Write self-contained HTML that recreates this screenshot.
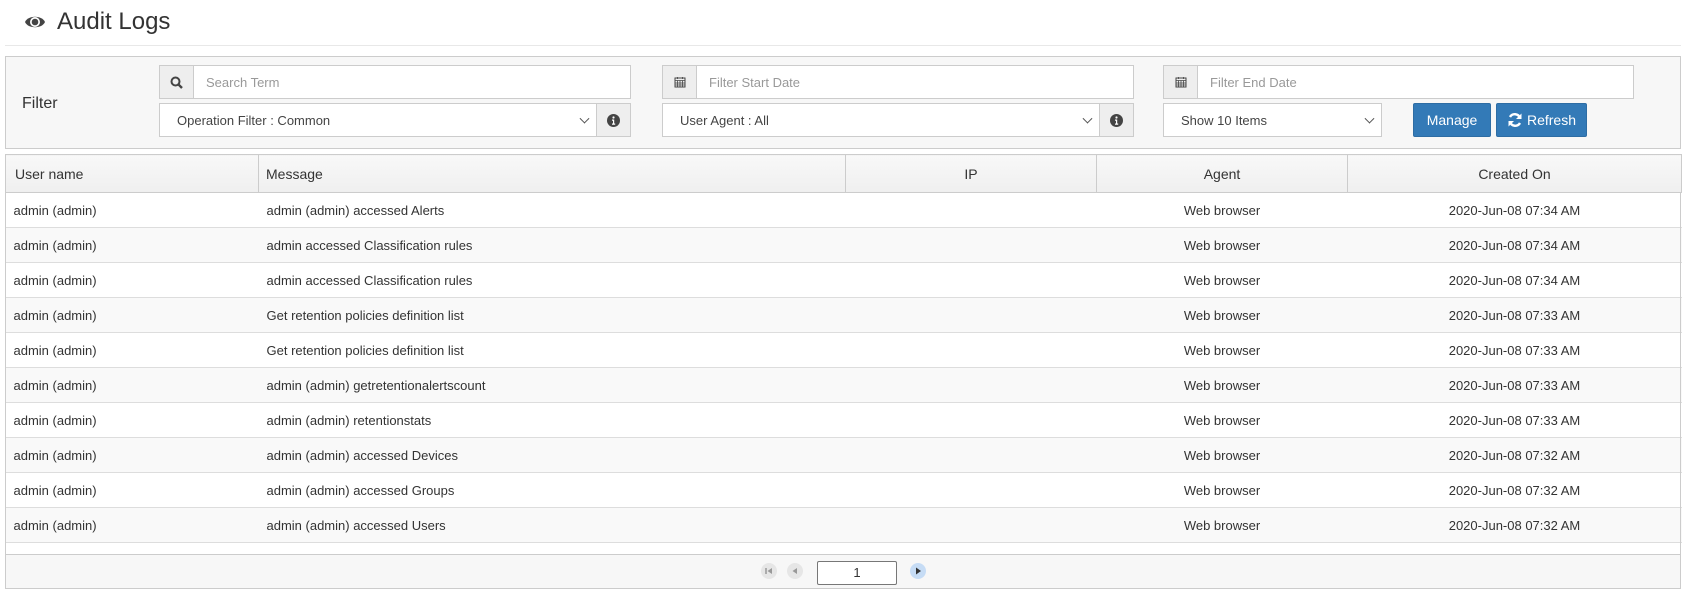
<!DOCTYPE html>
<html><head><meta charset="utf-8"><style>
*{box-sizing:border-box;margin:0;padding:0}
body{width:1688px;height:593px;background:#fff;font-family:"Liberation Sans",sans-serif;color:#333;position:relative;overflow:hidden;font-size:13px}
.abs{position:absolute}
.title{left:24px;top:8px;font-size:24px;color:#333;display:flex;align-items:center;gap:11px}
.sep{left:5px;right:7px;top:45px;height:1px;background:#e8e8e8}
.fbox{left:5px;top:56px;width:1676px;height:93px;background:#f7f7f7;border:1px solid #ccc}
.grp{position:absolute;height:34px;border:1px solid #ccc;background:#fff;display:flex;align-items:center}
.add{width:34px;height:100%;background:#eee;display:flex;align-items:center;justify-content:center;border-right:1px solid #ccc}
.addr{border-right:none;border-left:1px solid #ccc}
.ph{color:#999;padding-left:12px;flex:1;font-size:13px}
.sel{flex:1;padding-left:17px;position:relative;font-size:13px;color:#444}
.chev{position:absolute;right:8px;top:50%;width:7px;height:7px;border-right:1.5px solid #555;border-bottom:1.5px solid #555;transform:translateY(-70%) rotate(45deg)}
.btn{position:absolute;top:103px;height:34px;background:#337ab7;border:1px solid #2e6da4;border-radius:2px;color:#fff;font-size:14px;display:flex;align-items:center;justify-content:center;gap:4px}
table{position:absolute;left:5px;top:154px;width:1676px;border-collapse:collapse;font-size:13px;table-layout:fixed}
th{height:38px;font-weight:normal;font-size:14px;background:linear-gradient(#f8f8f8,#efefef);border:1px solid #ccc;color:#333}
td{height:35px;border-bottom:1px solid #ddd;padding:0 8px;color:#333}
tr:nth-child(odd) td{background:#f9f9f9}
.tl{border-left:1px solid #ccc;border-right:1px solid #ccc;position:absolute}
.pager{left:5px;top:554px;width:1676px;height:35px;background:#f7f7f7;border:1px solid #ccc}
.pc{position:absolute;top:563px;width:16px;height:16px;border-radius:50%;background:#e6e6e6}
</style></head><body>
<div class="abs title"><svg width="22" height="18" viewBox="0 0 22 18"><path d="M1 9C4 2 18 2 21 9C18 16 4 16 1 9Z" fill="#444"/><circle cx="11" cy="9" r="5" fill="#fff"/><circle cx="11" cy="9" r="3.3" fill="#444"/></svg><span>Audit Logs</span></div>
<div class="abs sep"></div>
<div class="abs fbox"></div>
<div class="abs" style="left:22px;top:95px;font-size:16px;color:#333">Filter</div>

<div class="grp" style="left:159px;top:65px;width:472px"><div class="add"><svg width="13" height="13" viewBox="0 0 13 13"><circle cx="5.5" cy="5.5" r="4" stroke="#444" stroke-width="2" fill="none"/><path d="M8.3 8.3L12 12" stroke="#444" stroke-width="2.4"/></svg></div><div class="ph">Search Term</div></div>
<div class="grp" style="left:159px;top:103px;width:472px"><div class="sel">Operation Filter : Common<span class="chev"></span></div><div class="add addr"><svg width="13" height="13" viewBox="0 0 13 13"><circle cx="6.5" cy="6.5" r="6.5" fill="#444"/><circle cx="6.5" cy="3.5" r="1.1" fill="#fff"/><path d="M5 5.5h2.2v4h1v1.2H5V9.5h1V6.7H5z" fill="#fff"/></svg></div></div>

<div class="grp" style="left:662px;top:65px;width:472px"><div class="add"><svg width="12" height="12" viewBox="0 0 12 12"><rect x="1" y="2" width="10" height="9" fill="none" stroke="#444"/><path d="M1 4.5h10M3.5 4.5v6M6 4.5v6M8.5 4.5v6M1 7h10M1 9h10M3.5 1v2M8.5 1v2" stroke="#444" stroke-width=".8"/></svg></div><div class="ph">Filter Start Date</div></div>
<div class="grp" style="left:662px;top:103px;width:472px"><div class="sel">User Agent : All<span class="chev"></span></div><div class="add addr"><svg width="13" height="13" viewBox="0 0 13 13"><circle cx="6.5" cy="6.5" r="6.5" fill="#444"/><circle cx="6.5" cy="3.5" r="1.1" fill="#fff"/><path d="M5 5.5h2.2v4h1v1.2H5V9.5h1V6.7H5z" fill="#fff"/></svg></div></div>

<div class="grp" style="left:1163px;top:65px;width:471px"><div class="add"><svg width="12" height="12" viewBox="0 0 12 12"><rect x="1" y="2" width="10" height="9" fill="none" stroke="#444"/><path d="M1 4.5h10M3.5 4.5v6M6 4.5v6M8.5 4.5v6M1 7h10M1 9h10M3.5 1v2M8.5 1v2" stroke="#444" stroke-width=".8"/></svg></div><div class="ph">Filter End Date</div></div>
<div class="grp" style="left:1163px;top:103px;width:219px"><div class="sel">Show 10 Items<span class="chev"></span></div></div>
<div class="btn" style="left:1413px;width:78px">Manage</div>
<div class="btn" style="left:1496px;width:91px"><svg width="16" height="16" viewBox="0 0 16 16"><path d="M13 6A5.5 5.5 0 0 0 3 5" stroke="#fff" stroke-width="2.4" fill="none"/><path d="M14.5 1.5V7H9z" fill="#fff"/><path d="M3 10A5.5 5.5 0 0 0 13 11" stroke="#fff" stroke-width="2.4" fill="none"/><path d="M1.5 14.5V9H7z" fill="#fff"/></svg>Refresh</div>

<table>
<colgroup><col style="width:253px"><col style="width:587px"><col style="width:251px"><col style="width:251px"><col style="width:334px"></colgroup>
<tr><th style="text-align:left;padding-left:9px">User name</th><th style="text-align:left;padding-left:7px">Message</th><th>IP</th><th>Agent</th><th>Created On</th></tr>
<tr><td>admin (admin)</td><td>admin (admin) accessed Alerts</td><td></td><td align="center">Web browser</td><td align="center">2020-Jun-08 07:34 AM</td></tr>
<tr><td>admin (admin)</td><td>admin accessed Classification rules</td><td></td><td align="center">Web browser</td><td align="center">2020-Jun-08 07:34 AM</td></tr>
<tr><td>admin (admin)</td><td>admin accessed Classification rules</td><td></td><td align="center">Web browser</td><td align="center">2020-Jun-08 07:34 AM</td></tr>
<tr><td>admin (admin)</td><td>Get retention policies definition list</td><td></td><td align="center">Web browser</td><td align="center">2020-Jun-08 07:33 AM</td></tr>
<tr><td>admin (admin)</td><td>Get retention policies definition list</td><td></td><td align="center">Web browser</td><td align="center">2020-Jun-08 07:33 AM</td></tr>
<tr><td>admin (admin)</td><td>admin (admin) getretentionalertscount</td><td></td><td align="center">Web browser</td><td align="center">2020-Jun-08 07:33 AM</td></tr>
<tr><td>admin (admin)</td><td>admin (admin) retentionstats</td><td></td><td align="center">Web browser</td><td align="center">2020-Jun-08 07:33 AM</td></tr>
<tr><td>admin (admin)</td><td>admin (admin) accessed Devices</td><td></td><td align="center">Web browser</td><td align="center">2020-Jun-08 07:32 AM</td></tr>
<tr><td>admin (admin)</td><td>admin (admin) accessed Groups</td><td></td><td align="center">Web browser</td><td align="center">2020-Jun-08 07:32 AM</td></tr>
<tr><td>admin (admin)</td><td>admin (admin) accessed Users</td><td></td><td align="center">Web browser</td><td align="center">2020-Jun-08 07:32 AM</td></tr>
</table>
<div class="tl" style="left:5px;top:192px;width:1676px;height:362px"></div>
<div class="abs pager"></div>
<div class="pc" style="left:761px"><svg width="16" height="16" viewBox="0 0 16 16"><path d="M5 5v6" stroke="#999" stroke-width="1.5"/><path d="M11 5v6L6.5 8z" fill="#999"/></svg></div>
<div class="pc" style="left:787px"><svg width="16" height="16" viewBox="0 0 16 16"><path d="M10 5v6L5.5 8z" fill="#999"/></svg></div>
<div class="abs" style="left:817px;top:561px;width:80px;height:24px;border:1px solid #777;border-radius:2px;background:#fff;text-align:center;line-height:22px;font-size:13px">1</div>
<div class="pc" style="left:910px;background:#c6dcf5"><svg width="16" height="16" viewBox="0 0 16 16"><path d="M6 4.5v7L11 8z" fill="#333"/></svg></div>
</body></html>
